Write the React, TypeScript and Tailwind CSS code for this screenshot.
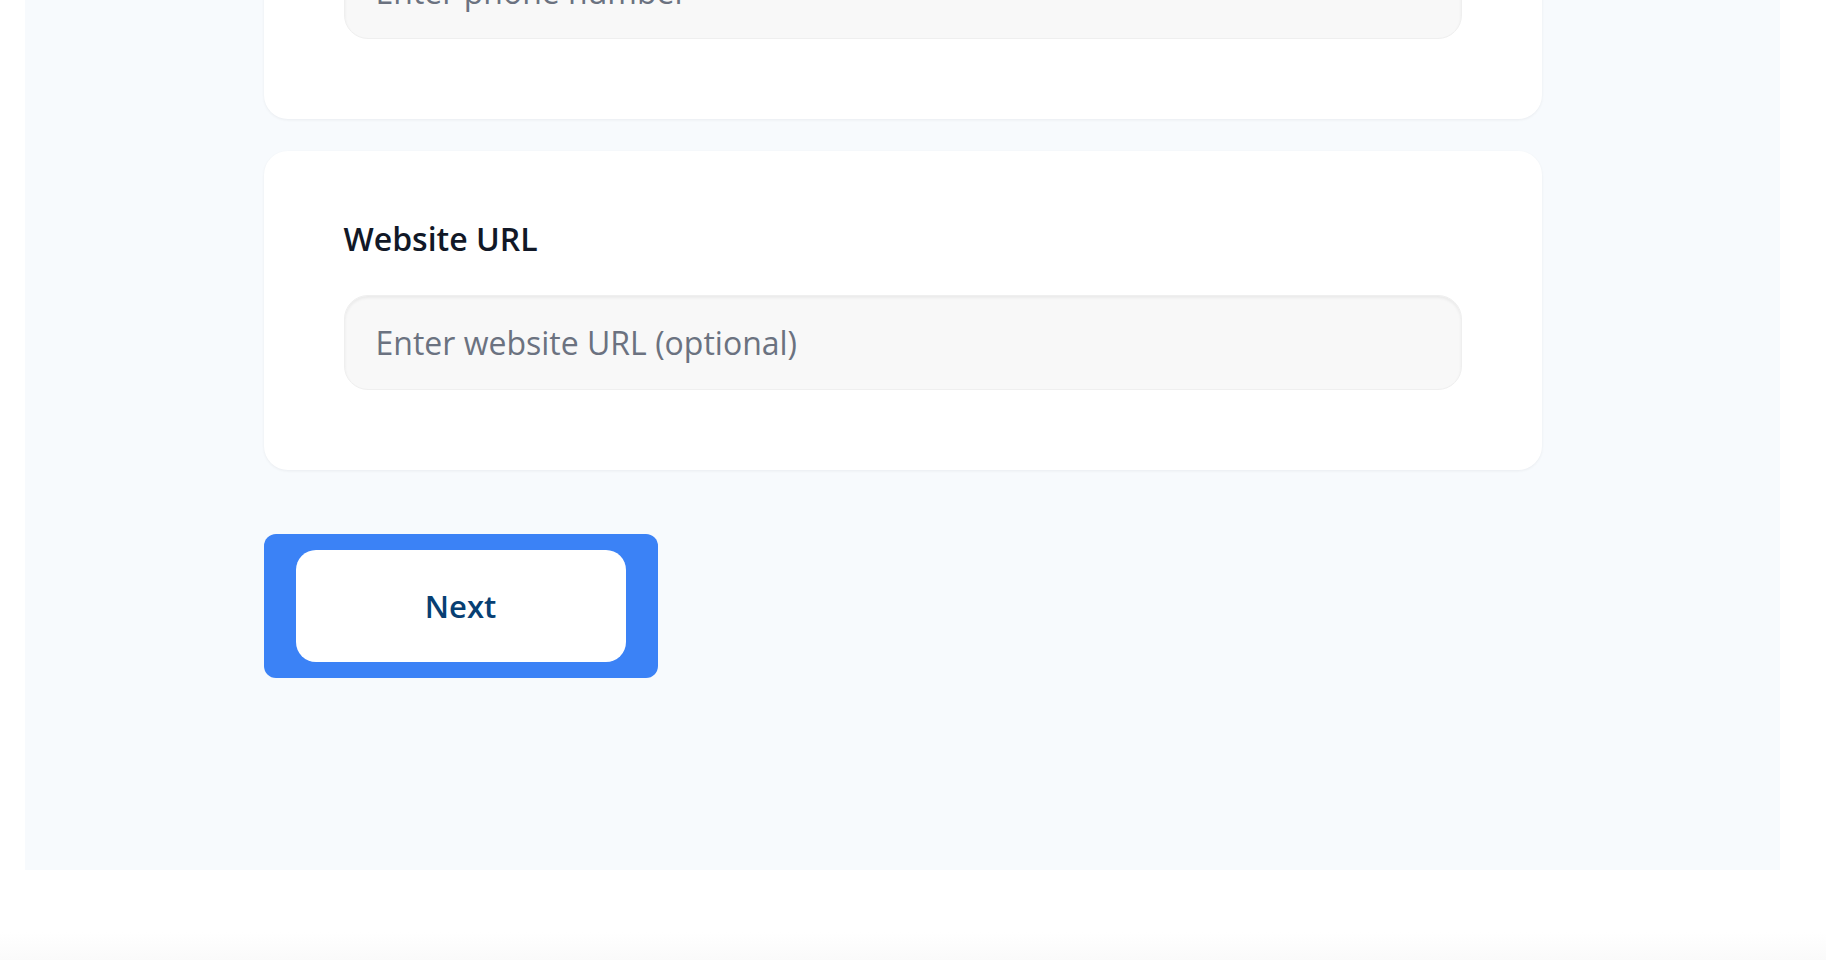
import React from 'react';

const fieldFont = { fontFamily: '"Open Sans", "Noto Sans", Arial, sans-serif' };

type FieldProps = {
  label: string;
  placeholder: string;
  type?: string;
};

const FieldCard: React.FC<FieldProps> = ({ label, placeholder, type = 'text' }) => {
  return (
    <div className="bg-white rounded-3xl shadow-[0_1px_3px_rgba(15,23,42,0.06)] px-20 pt-16 pb-20">
      <label className="block text-[32px] leading-[48px] font-semibold text-[#111827] mb-8">{label}</label>
      <input
        type={type}
        placeholder={placeholder}
        className="w-full h-[95px] px-[31px] rounded-3xl bg-[#f8f8f8] border border-[#efefef] shadow-[inset_0_2px_3px_rgba(0,0,0,0.06)] text-[32px] text-[#111827] placeholder:text-[#6b7280] outline-none"
        style={fieldFont}
      />
    </div>
  );
};

const App: React.FC = () => {
  return (
    <div className="min-h-screen bg-white" style={fieldFont}>
      {/* page is scrolled: first card starts above the viewport */}
      <div className="-mt-[200px] pl-[25px] pr-[46px]">
        <div className="bg-[#f7fafd] pb-[192px]">
          <div className="mx-auto w-[1278px] flex flex-col">
            <div className="flex flex-col gap-8">
              <FieldCard label="Phone Number" placeholder="Enter phone number" type="tel" />
              <FieldCard label="Website URL" placeholder="Enter website URL (optional)" type="url" />
            </div>

            <div className="mt-16">
              <button className="bg-[#3b82f6] rounded-xl px-8 py-4">
                <span className="flex items-center justify-center w-[330px] h-[112px] bg-white rounded-[20px] text-[31px] font-semibold text-[#073f73]">
                  Next
                </span>
              </button>
            </div>
          </div>
        </div>
      </div>
      <div className="h-[62px] bg-white" />
      <div className="h-[28px] bg-gradient-to-b from-white to-[#fafafa]" />
    </div>
  );
};

export default App;
